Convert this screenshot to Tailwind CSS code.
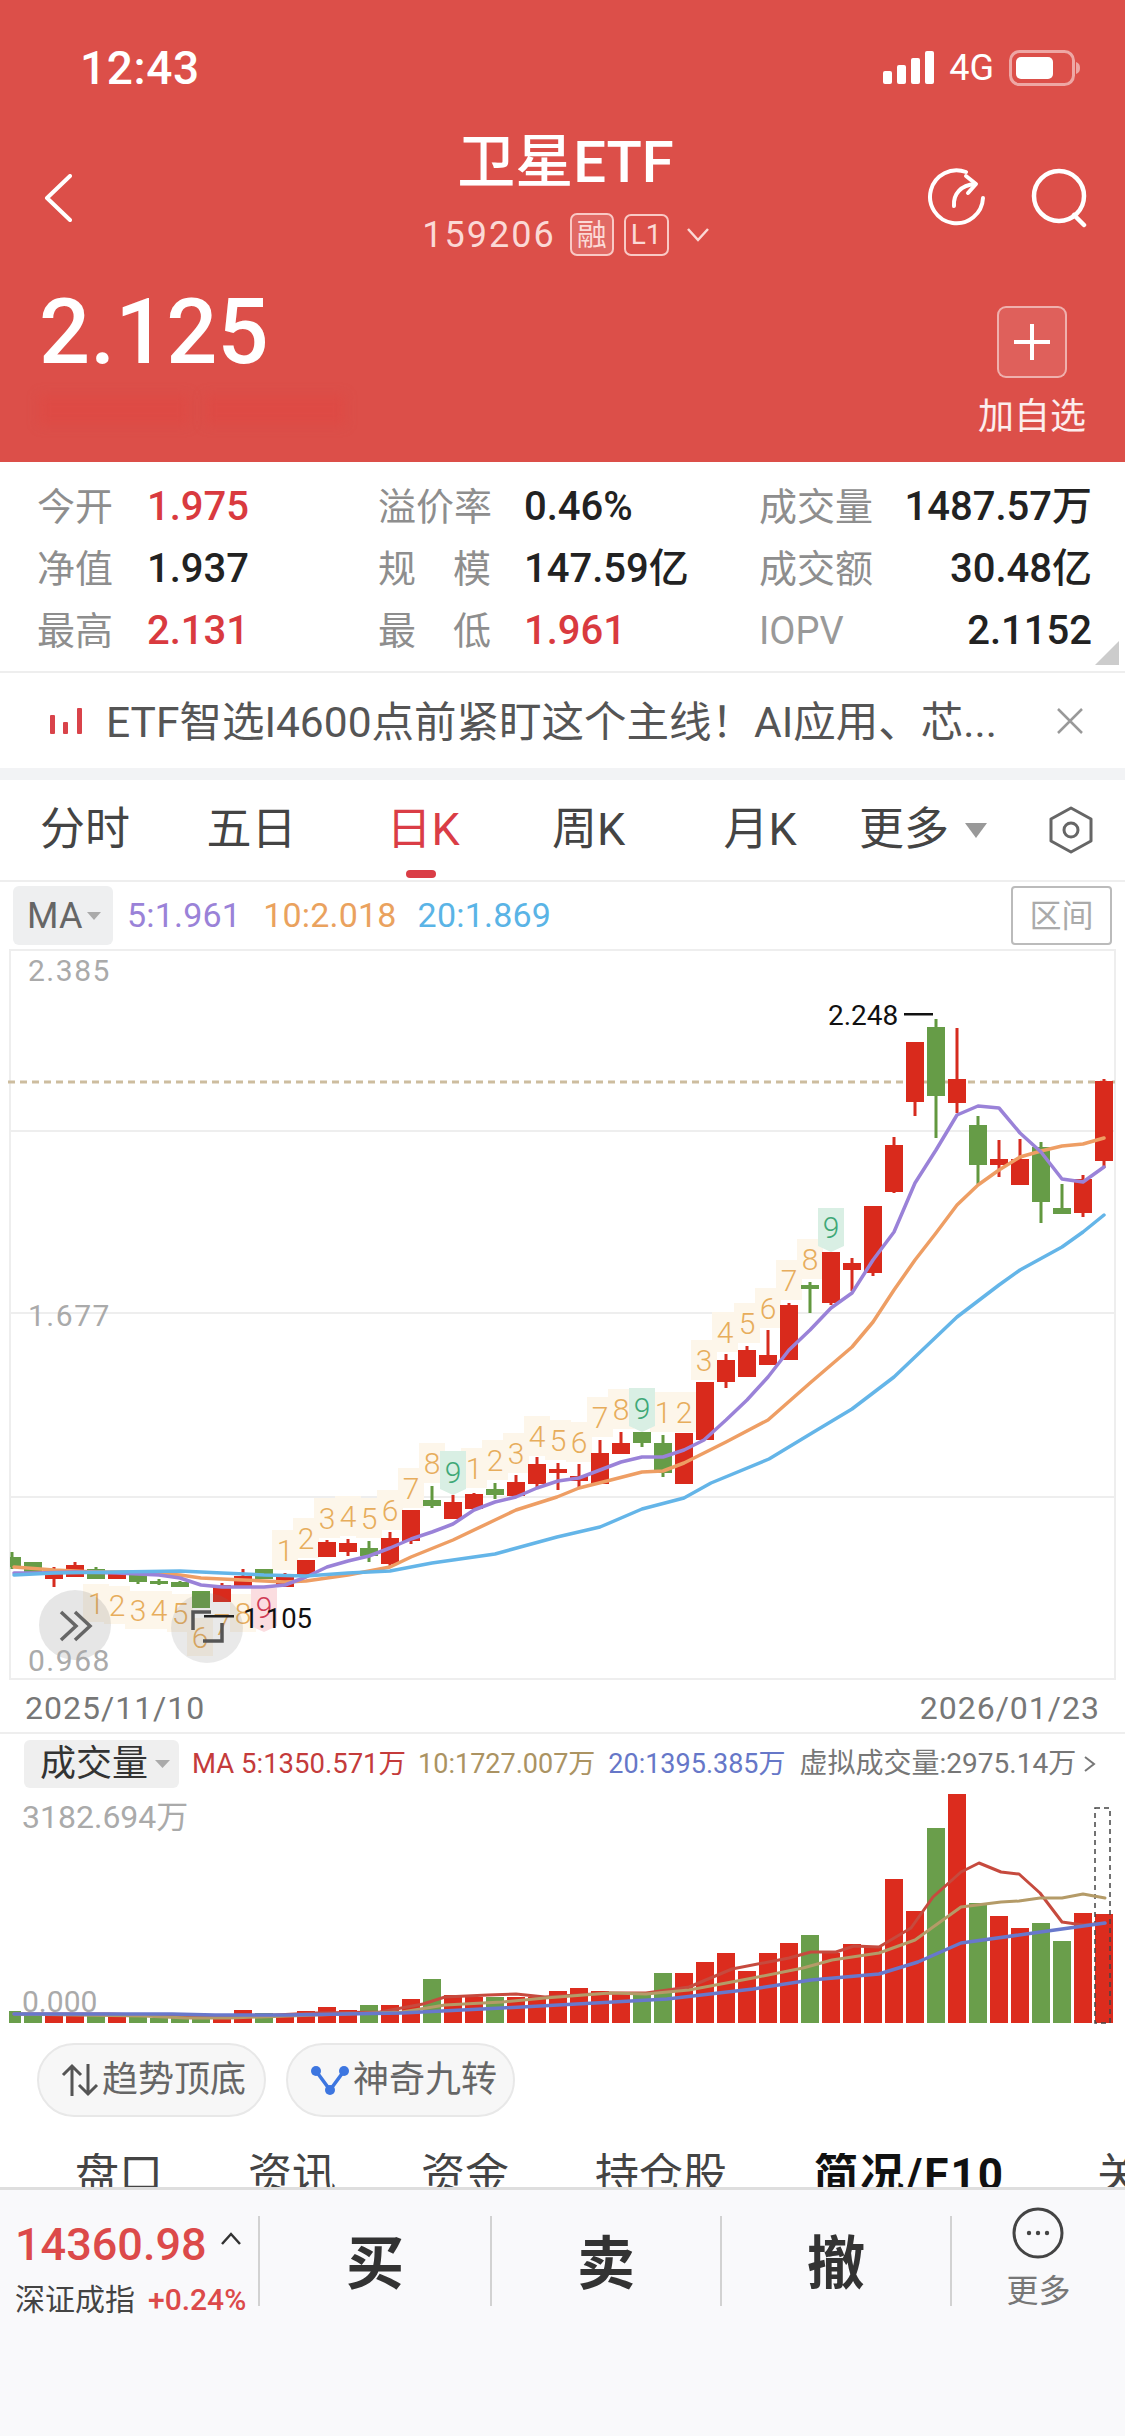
<!DOCTYPE html>
<html lang="zh">
<head>
<meta charset="utf-8">
<script src="https://cdn.jsdelivr.net/npm/@tailwindcss/browser@4"></script>
</head>
<body>
<div class="w-[1125px] h-[2436px] overflow-hidden flex flex-col bg-white font-['Roboto','Noto_Sans_CJK_SC',sans-serif]">

  <header class="h-[462px] shrink-0 bg-[#dc4f49] text-white flex flex-col">
    <div class="h-[136px] shrink-0 flex items-center justify-between pl-[80px] pr-[44px]">
      <span class="text-[46px] leading-none tracking-[.6px] font-medium">12:43</span>
      <div class="flex items-center">
        <svg width="52" height="34" viewBox="0 0 52 34" class="mr-[14px]"><g fill="#fff"><rect x="0" y="20" width="9" height="13" rx="2"/><rect x="14" y="14" width="9" height="19" rx="2"/><rect x="28" y="7" width="9" height="26" rx="2"/><rect x="42" y="0" width="9" height="33" rx="2"/></g></svg>
        <span class="text-[36px] leading-none mr-[15px]">4G</span>
        <svg width="72" height="36" viewBox="0 0 72 36"><rect x="1.5" y="1.5" width="63" height="33" rx="9" fill="none" stroke="#fff" stroke-opacity=".5" stroke-width="3"/><rect x="7" y="7" width="37" height="22" rx="5" fill="#fff"/><path d="M67 12c3 1 4 3 4 6s-1 5-4 6z" fill="#fff" fill-opacity=".5"/></svg>
      </div>
    </div>

    <div class="h-[124px] shrink-0 grid grid-cols-[1fr_auto_1fr] items-center pl-[44px] pr-[38px]">
      <svg width="28" height="48" viewBox="0 0 28 48" fill="none" stroke="#fff" stroke-width="4" stroke-linecap="round" stroke-linejoin="round"><path d="M26 2 3 24l23 22"/></svg>
      <div class="flex flex-col items-center -translate-y-[4px]">
        <div class="text-[58px] leading-[60px] font-medium">卫星ETF</div>
        <div class="flex items-center mt-[21px] text-[#fbd9d6]">
          <span class="text-[36px] leading-none tracking-[2px] mr-[14px]">159206</span>
          <span class="w-[44px] h-[43px] border-2 border-[#f9c9c5] rounded-[7px] bg-white/15 flex items-center justify-center text-[30px] leading-none mr-[10px]">融</span>
          <span class="w-[45px] h-[42px] border-2 border-[#f9c9c5] rounded-[7px] flex items-center justify-center text-[28px] leading-none mr-[18px]">L1</span>
          <svg width="22" height="14" viewBox="0 0 22 14" fill="none" stroke="#fbd9d6" stroke-width="2.5"><path d="M1 1l10 11L21 1"/></svg>
        </div>
      </div>
      <div class="flex justify-end items-center gap-[44px]">
        <svg width="60" height="60" viewBox="927 168 60 60" fill="none" stroke="#fff" stroke-width="4" stroke-linecap="round" stroke-linejoin="round"><path d="M966 172A26.500 26.500 0 1 0 983 198"/><path d="M954 206C953 194 961 185 975 184"/><path d="M966 176l10 8-8 9"/></svg>
        <svg width="56" height="60" viewBox="1032 170 56 60" fill="none" stroke="#fff" stroke-width="4.500" stroke-linecap="round"><circle cx="1060" cy="198" r="25"/><path d="M1075 217l10 10"/></svg>
      </div>
    </div>

    <div class="flex-1 flex justify-between pl-[39px] pr-[40px]">
      <div class="flex flex-col">
        <div class="text-[90px] leading-[92px] font-medium mt-[27px]">2.125</div>
        <div class="flex mt-[16px] gap-[16px]">
          <div class="w-[150px] h-[30px] bg-[#e2443e]/40 blur-[6px]"></div>
          <div class="w-[140px] h-[30px] bg-[#e2443e]/40 blur-[6px]"></div>
        </div>
      </div>
      <div class="flex flex-col items-center w-[106px]">
        <div class="w-[70px] h-[72px] mt-[46px] border-2 border-white/50 bg-white/10 rounded-[9px] flex items-center justify-center">
          <svg width="36" height="36" viewBox="0 0 36 36" stroke="#fff" stroke-width="4"><path d="M18 0v36M0 18h36"/></svg>
        </div>
        <div class="text-[36px] leading-[40px] mt-[19px] text-white/90 whitespace-nowrap">加自选</div>
      </div>
    </div>
  </header>

  <section class="relative h-[211px] shrink-0 border-b-2 border-[#eeeeee] pt-[14px] pl-[37px] grid grid-cols-[341px_381px_1fr] grid-rows-[62px_62px_62px] text-[40px] leading-none font-medium text-[#222] items-center">
    <div class="flex items-center"><span class="w-[110px] text-[38px] font-normal text-[#8e8e8e]">今开</span><span class="text-[#d93a3f]">1.975</span></div>
    <div class="flex items-center"><span class="w-[146px] text-[38px] font-normal text-[#8e8e8e]">溢价率</span><span>0.46%</span></div>
    <div class="flex items-center justify-between pr-[33px]"><span class="text-[38px] font-normal text-[#8e8e8e]">成交量</span><span>1487.57万</span></div>

    <div class="flex items-center"><span class="w-[110px] text-[38px] font-normal text-[#8e8e8e]">净值</span><span>1.937</span></div>
    <div class="flex items-center"><span class="w-[146px] pr-[33px] flex justify-between text-[38px] font-normal text-[#8e8e8e]"><span>规</span><span>模</span></span><span>147.59亿</span></div>
    <div class="flex items-center justify-between pr-[33px]"><span class="text-[38px] font-normal text-[#8e8e8e]">成交额</span><span>30.48亿</span></div>

    <div class="flex items-center"><span class="w-[110px] text-[38px] font-normal text-[#8e8e8e]">最高</span><span class="text-[#d93a3f]">2.131</span></div>
    <div class="flex items-center"><span class="w-[146px] pr-[33px] flex justify-between text-[38px] font-normal text-[#8e8e8e]"><span>最</span><span>低</span></span><span class="text-[#d93a3f]">1.961</span></div>
    <div class="flex items-center justify-between pr-[33px]"><span class="text-[38px] font-normal text-[#999]">IOPV</span><span>2.1152</span></div>

    <svg class="absolute right-[6px] bottom-[6px]" width="24" height="24" viewBox="0 0 24 24"><path d="M24 0v24H0z" fill="#cccccc"/></svg>
  </section>

  <section class="h-[95px] shrink-0 flex items-center pl-[50px] pr-[42px]">
    <svg width="32" height="26" viewBox="0 0 32 26" fill="#d9434a" class="mr-[24px]"><rect x="0" y="7" width="5" height="19" rx="1"/><rect x="13" y="14" width="5" height="12" rx="1"/><rect x="27" y="0" width="5" height="26" rx="1"/></svg>
    <span class="flex-1 mt-[6px] text-[42.500px] leading-none text-[#555] whitespace-nowrap">ETF智选I4600点前紧盯这个主线！AI应用、芯...</span>
    <svg width="26" height="26" viewBox="0 0 26 26" stroke="#999" stroke-width="2.500" fill="none"><path d="M1 1l24 24M25 1 1 25"/></svg>
  </section>
  <div class="h-[12px] shrink-0 bg-[#f2f3f5]"></div>

  <nav class="relative h-[102px] shrink-0 border-b-2 border-[#eeeeee] flex items-center text-[45px] text-[#444]">
    <span class="w-[170px] text-center">分时</span>
    <span class="w-[163px] text-center">五日</span>
    <span class="w-[180px] text-center text-[#da3d46]">日K</span>
    <span class="w-[151px] text-center">周K</span>
    <span class="w-[192px] text-center">月K</span>
    <span class="ml-[3px]">更多</span>
    <svg class="ml-[16px]" width="22" height="15" viewBox="0 0 22 15"><path d="M0 0h22L11 15z" fill="#999"/></svg>
    <svg class="ml-[62px]" width="44" height="48" viewBox="0 0 44 48" fill="none" stroke="#666" stroke-width="3" stroke-linejoin="round"><path d="M22 2l20 11v22L22 46 2 35V13z"/><circle cx="22" cy="24" r="7"/></svg>
    <div class="absolute left-[406px] bottom-[2px] w-[30px] h-[8px] rounded-full bg-[#da3d46]"></div>
  </nav>

  <section class="h-[67px] shrink-0 flex items-center pl-[13px] pr-[13px] text-[34px] tracking-[.2px]">
    <div class="w-[100px] h-[59px] rounded-[6px] bg-[#eeeff0] flex items-center pl-[14px] text-[36px] text-[#666]">MA<svg class="ml-[4px]" width="14" height="8" viewBox="0 0 14 8"><path d="M0 0h14L7 8z" fill="#aaa"/></svg></div>
    <span class="ml-[14px] text-[#9a82d8]">5:1.961</span>
    <span class="ml-[22px] text-[#eaa25e]">10:2.018</span>
    <span class="ml-[21px] text-[#5ab4e6]">20:1.869</span>
    <span class="ml-auto w-[101px] h-[59px] border-2 border-[#bbb] rounded-[4px] flex items-center justify-center text-[32px] tracking-normal text-[#aaa]">区间</span>
  </section>

  <svg class="shrink-0" width="1125" height="731" viewBox="0 949 1125 731">
    <g stroke="#eeeeee" stroke-width="2" fill="none"><path d="M10 950H1115M10 1131H1115M10 1313H1115M10 1497H1115M10 1679H1115M10 949V1680M1115 949V1680"/></g>
    <path d="M8 1082H1115" stroke="#cdbd9f" stroke-width="3" stroke-dasharray="7 5"/>

    <!-- TD sequence markers -->
    <g fill="#fdf6ea">
      <path d="M83 1584h26v38H83zM104 1586h26v38h-26zM125 1591h26v38h-26zM146 1591h26v38h-26zM167 1594h26v38h-26zM187 1618h26v38h-26zM230 1594h26v38h-26z"/>
      <path d="M272 1530h26v40h-26zM293 1518h26v40h-26zM314 1498h26v40h-26zM335 1496h26v40h-26zM356 1498h26v40h-26zM377 1490h26v40h-26zM398 1468h26v40h-26zM419 1443h26v40h-26zM461 1448h26v40h-26zM482 1440h26v40h-26zM503 1433h26v40h-26zM524 1416h26v40h-26zM545 1420h26v40h-26zM566 1422h26v40h-26zM587 1397h26v40h-26zM608 1389h26v40h-26zM650 1392h26v40h-26zM671 1392h26v40h-26z"/>
      <path d="M691 1340h26v40h-26zM712 1312h26v40h-26zM734 1303h26v40h-26zM755 1288h26v40h-26zM776 1260h26v40h-26zM797 1239h26v40h-26z"/>
    </g>
    <g fill="#d9efe4"><path d="M440 1451h26v38l-13 6-13-6zM629 1388h26v38l-13 6-13-6zM818 1208h26v38l-13 6-13-6z"/></g>
    <path d="M251 1588h26v38l-13 6-13-6z" fill="#fbdde0"/>
    <g fill="#e7ad5c" font-size="30" font-weight="300" text-anchor="middle">
      <text x="96" y="1614">1</text><text x="117" y="1616">2</text><text x="138" y="1621">3</text><text x="159" y="1621">4</text><text x="180" y="1624">5</text><text x="200" y="1648">6</text><text x="222" y="1635">7</text><text x="243" y="1624">8</text>
      <text x="285" y="1561">1</text><text x="306" y="1549">2</text><text x="327" y="1529">3</text><text x="348" y="1527">4</text><text x="369" y="1529">5</text><text x="390" y="1521">6</text><text x="411" y="1499">7</text><text x="432" y="1474">8</text><text x="474" y="1479">1</text><text x="495" y="1471">2</text><text x="516" y="1464">3</text><text x="537" y="1447">4</text><text x="558" y="1451">5</text><text x="579" y="1453">6</text><text x="600" y="1428">7</text><text x="621" y="1420">8</text><text x="663" y="1423">1</text><text x="684" y="1423">2</text>
      <text x="704" y="1371">3</text><text x="725" y="1343">4</text><text x="747" y="1334">5</text><text x="768" y="1319">6</text><text x="789" y="1291">7</text><text x="810" y="1270">8</text>
    </g>
    <g fill="#3fa877" font-size="30" font-weight="300" text-anchor="middle"><text x="453" y="1483">9</text><text x="642" y="1419">9</text><text x="831" y="1238">9</text></g>
    <text x="264" y="1618" fill="#d03a55" font-size="30" font-weight="300" text-anchor="middle">9</text>

    <!-- candles -->
    <path fill="none" stroke="#d62b1f" stroke-width="3" d="M54 1567V1587M75 1562V1577M222 1583V1602M243 1569V1587M285 1573V1587M327 1540V1557M348 1539V1556M390 1532V1567M411 1510V1544M453 1495V1519M474 1493V1509M516 1475V1496M537 1457V1487M558 1463V1490M579 1464V1489M600 1440V1484M621 1432V1454M726 1354V1388M747 1346V1377M768 1330V1365M789 1303V1360M831 1252V1305M852 1258V1291M873 1206V1276M894 1137V1193M915 1042V1116M957 1028V1113M999 1140V1177M1020 1139V1185M1083 1175V1217M1104 1079V1168"/>
    <path fill="#d92a1c" d="M45 1573h18V1579h-18zM66 1565h18V1577h-18zM108 1571h18V1579h-18zM213 1585h18V1602h-18zM234 1576h18V1587h-18zM276 1577h18V1587h-18zM297 1560h18V1577h-18zM318 1542h18V1557h-18zM339 1543h18V1552h-18zM381 1538h18V1564h-18zM402 1510h18V1541h-18zM444 1502h18V1519h-18zM465 1494h18V1509h-18zM507 1482h18V1496h-18zM528 1464h18V1484h-18zM549 1469h18V1473h-18zM570 1476h18V1481h-18zM591 1453h18V1484h-18zM612 1443h18V1454h-18zM675 1433h18V1484h-18zM696 1382h18V1440h-18zM717 1360h18V1382h-18zM738 1350h18V1377h-18zM759 1355h18V1365h-18zM780 1305h18V1360h-18zM822 1252h18V1303h-18zM843 1263h18V1270h-18zM864 1206h18V1273h-18zM885 1145h18V1192h-18zM906 1042h18V1102h-18zM948 1079h18V1103h-18zM990 1159h18V1165h-18zM1011 1159h18V1185h-18zM1074 1179h18V1213h-18zM1095 1081h18V1161h-18z"/>
    <path fill="none" stroke="#62983f" stroke-width="3" d="M12 1552V1569M96 1567V1579M138 1575V1584M159 1579V1585M180 1581V1587M369 1541V1562M432 1486V1508M495 1483V1499M642 1432V1447M663 1435V1477M810 1282V1313M936 1019V1138M978 1116V1184M1041 1142V1223M1062 1184V1214"/>
    <path fill="#669c47" d="M10 1557h11V1567h-11zM24 1562h18V1575h-18zM87 1569h18V1579h-18zM129 1575h18V1582h-18zM150 1581h18V1584h-18zM171 1582h18V1587h-18zM192 1591h18V1608h-18zM255 1569h18V1579h-18zM360 1548h18V1556h-18zM423 1500h18V1506h-18zM486 1489h18V1495h-18zM633 1432h18V1443h-18zM654 1443h18V1473h-18zM801 1285h18V1289h-18zM927 1027h18V1096h-18zM969 1125h18V1165h-18zM1032 1147h18V1202h-18zM1053 1208h18V1214h-18z"/>

    <!-- moving averages -->
    <g fill="none" stroke-width="3.500" stroke-linejoin="round" stroke-linecap="round">
      <polyline stroke="#ee9e64" points="14,1567 54,1570 96,1572 138,1572 180,1575 201,1578 243,1580 285,1582 306,1581 348,1575 390,1567 411,1557 453,1540 495,1520 516,1510 557,1497 579,1488 607,1481 642,1472 663,1471 684,1463 704,1453 726,1442 768,1420 810,1383 852,1347 873,1322 894,1290 915,1260 936,1233 957,1205 978,1185 999,1170 1020,1157 1041,1151 1062,1146 1083,1144 1104,1138"/>
      <polyline stroke="#9a82d8" points="14,1573 36,1573 75,1572 117,1573 159,1575 180,1578 201,1585 222,1587 243,1587 264,1587 285,1585 306,1577 327,1567 348,1561 369,1556 390,1548 411,1539 432,1532 453,1524 474,1510 495,1502 516,1497 537,1488 558,1481 579,1478 600,1470 621,1462 642,1457 663,1457 684,1450 704,1440 726,1420 747,1400 768,1377 789,1350 810,1330 831,1308 852,1293 873,1260 894,1232 915,1183 936,1150 957,1115 978,1106 999,1108 1020,1133 1041,1152 1062,1179 1083,1182 1104,1167"/>
      <polyline stroke="#64b5e8" points="14,1575 54,1573 117,1572 180,1571 222,1573 264,1575 306,1576 348,1573 390,1571 432,1563 495,1554 557,1537 600,1527 642,1509 684,1498 711,1483 769,1459 812,1433 852,1409 894,1377 915,1357 957,1317 999,1285 1020,1270 1062,1247 1083,1232 1104,1215"/>
    </g>

    <!-- high / low marks -->
    <text x="828" y="1025" font-size="28" fill="#111">2.248</text>
    <rect x="904" y="1013" width="29" height="2.500" fill="#111"/>
    <text x="243" y="1628" font-size="27.500" fill="#111">1.105</text>
    <rect x="204" y="1615" width="30" height="2.500" fill="#111"/>

    <!-- floating buttons -->
    <ellipse cx="75" cy="1625" rx="36" ry="35" fill="#777" fill-opacity=".18"/>
    <path d="M61 1612l15 14-15 14M75 1612l15 14-15 14" fill="none" stroke="#666" stroke-width="3.500"/>
    <ellipse cx="207" cy="1628" rx="36" ry="35" fill="#777" fill-opacity=".16"/>
    <path d="M193 1630v-18h18M222 1623v18h-19" fill="none" stroke="#555" stroke-width="3.500"/>

    <g font-size="30" fill="#aaaaaa" letter-spacing="1.500">
      <text x="28" y="981">2.385</text>
      <text x="28" y="1326">1.677</text>
      <text x="28" y="1671">0.968</text>
    </g>
  </svg>

  <div class="h-[54px] shrink-0 border-b-2 border-[#eeeeee] flex items-center justify-between pt-[4px] pl-[25px] pr-[25px] text-[32px] leading-none text-[#777] tracking-[1px]">
    <span>2025/11/10</span><span>2026/01/23</span>
  </div>

  <div class="h-[60px] shrink-0 flex items-center pl-[24px] text-[27px] leading-none whitespace-nowrap">
    <div class="w-[155px] h-[48px] bg-[#efefef] rounded-[6px] flex items-center pl-[16px] text-[36px] text-[#333]">成交量<svg class="ml-[7px]" width="15" height="8" viewBox="0 0 15 8"><path d="M0 0h15L7.500 8z" fill="#aaa"/></svg></div>
    <span class="ml-[13px] text-[27.500px] text-[#c43b3b]">MA 5:1350.571万</span>
    <span class="ml-[12px] text-[#ab9362]">10:1727.007万</span>
    <span class="ml-[13px] text-[#6677c8]">20:1395.385万</span>
    <span class="ml-[14px] text-[28px] text-[#777]">虚拟成交量:2975.14万</span>
    <svg class="ml-[8px]" width="12" height="16" viewBox="0 0 12 16" fill="none" stroke="#777" stroke-width="2"><path d="M1 1l9 7-9 7"/></svg>
  </div>

  <svg class="shrink-0" width="1125" height="234" viewBox="0 1794 1125 234">
    <path fill="#dc2c1e" d="M45 2016h18V2023h-18zM66 2016h18V2023h-18zM108 2015h18V2023h-18zM213 2015h18V2023h-18zM234 2010h18V2023h-18zM276 2015h18V2023h-18zM297 2011h18V2023h-18zM318 2007h18V2023h-18zM339 2010h18V2023h-18zM381 2005h18V2023h-18zM402 1999h18V2023h-18zM444 1995h18V2023h-18zM465 1997h18V2023h-18zM507 1997h18V2023h-18zM528 1997h18V2023h-18zM549 1991h18V2023h-18zM570 1988h18V2023h-18zM591 1991h18V2023h-18zM612 1993h18V2023h-18zM675 1973h18V2023h-18zM696 1962h18V2023h-18zM717 1953h18V2023h-18zM738 1971h18V2023h-18zM759 1953h18V2023h-18zM780 1943h18V2023h-18zM822 1953h18V2023h-18zM843 1944h18V2023h-18zM864 1946h18V2023h-18zM885 1879h18V2023h-18zM906 1911h18V2023h-18zM948 1792h18V2023h-18zM990 1916h18V2023h-18zM1011 1928h18V2023h-18zM1074 1913h18V2023h-18zM1095 1914h18V2023h-18z"/>
    <path fill="#6a9e4b" d="M9 2011h12V2023H9zM24 2015h18V2023h-18zM87 2015h18V2023h-18zM129 2017h18V2023h-18zM150 2018h18V2023h-18zM171 2018h18V2023h-18zM192 2017h18V2023h-18zM255 2013h18V2023h-18zM360 2005h18V2023h-18zM423 1979h18V2023h-18zM486 1997h18V2023h-18zM633 1993h18V2023h-18zM654 1973h18V2023h-18zM801 1935h18V2023h-18zM927 1828h18V2023h-18zM969 1903h18V2023h-18zM1032 1923h18V2023h-18zM1053 1941h18V2023h-18z"/>
    <rect x="1095" y="1808" width="15" height="215" fill="none" stroke="#444" stroke-width="1.500" stroke-dasharray="5 4"/>
    <g fill="none" stroke-width="3" stroke-linejoin="round" stroke-linecap="round">
      <polyline stroke="#c64a3e" points="14,2014 108,2014 179,2016 230,2017 316,2013 380,2012 423,2004 445,1997 488,1995 516,1994 545,1997 610,1993 646,1993 689,1987 732,1969 789,1958 811,1952 836,1952 854,1946 879,1947 911,1928 933,1897 961,1872 979,1863 1001,1872 1019,1874 1040,1893 1062,1922 1083,1925 1105,1923"/>
      <polyline stroke="#b49b68" points="14,2014 143,2016 187,2018 230,2018 316,2015 402,2012 445,2005 502,2002 545,1998 610,1993 646,1994 689,1990 753,1978 803,1968 832,1960 879,1953 915,1940 961,1907 1001,1902 1019,1901 1040,1898 1062,1898 1083,1894 1105,1898"/>
      <polyline stroke="#6878cc" stroke-width="3.500" points="14,2014 172,2014 215,2015 287,2015 402,2013 502,2008 595,2003 667,1999 753,1989 811,1980 879,1974 918,1962 961,1943 1019,1935 1105,1923"/>
    </g>
    <text x="22" y="1828" font-size="32" fill="#aaaaaa">3182.694万</text>
    <text x="22" y="2012" font-size="30" fill="#aaaaaa">0.000</text>
  </svg>

  <div class="h-[125px] shrink-0 flex items-start pt-[15px] pl-[37px] gap-[20px] text-[36px] leading-none text-[#666]">
    <div class="w-[229px] h-[74px] rounded-full border-2 border-[#e8e8e8] bg-[#f7f7f7] flex items-center pl-[22px]">
      <svg width="38" height="34" viewBox="0 0 38 34" fill="none" stroke="#555" stroke-width="3" class="mr-[3px]"><path d="M11 33V3M2 12l9-9 9 9M27 1v30M18 22l9 9 9-9"/></svg>
      <span>趋势顶底</span>
    </div>
    <div class="w-[229px] h-[74px] rounded-full border-2 border-[#e8e8e8] bg-[#f7f7f7] flex items-center pl-[23px]">
      <svg width="38" height="30" viewBox="0 0 38 30" class="mr-[4px]"><path d="M5 6 19 25 33 6" fill="none" stroke="#3d76e0" stroke-width="3.500"/><circle cx="5" cy="6" r="5" fill="#3d76e0"/><circle cx="33" cy="6" r="5" fill="#3d76e0"/><circle cx="19" cy="25" r="5" fill="#3d76e0"/></svg>
      <span>神奇九转</span>
    </div>
  </div>

  <div class="h-[34px] shrink-0 overflow-hidden flex items-start pl-[75px] text-[44px] leading-[44px] text-[#444] whitespace-nowrap">
    <span class="w-[173px] shrink-0">盘口</span>
    <span class="w-[173px] shrink-0">资讯</span>
    <span class="w-[174px] shrink-0">资金</span>
    <span class="w-[219px] shrink-0">持仓股</span>
    <span class="w-[283px] shrink-0 font-bold tracking-[2px] text-[#111]">简况/F10</span>
    <span class="shrink-0">关</span>
  </div>

  <footer class="flex-1 border-t-[3px] border-[#dedede] bg-[#f9f9fb] flex items-start pt-[26px]">
    <div class="w-[258px] flex flex-col pl-[15px]">
      <div class="flex items-center h-[56px] shrink-0">
        <span class="text-[45px] leading-none font-medium text-[#dc4a4a]">14360.98</span>
        <svg class="ml-[14px] -mt-[12px]" width="20" height="13" viewBox="0 0 20 13" fill="none" stroke="#333" stroke-width="2.500"><path d="M1 12 10 2l9 10"/></svg>
      </div>
      <div class="flex items-center h-[40px] shrink-0 mt-[8px] text-[30px] leading-none whitespace-nowrap">
        <span class="text-[#444]">深证成指</span>
        <span class="ml-[13px] font-medium text-[#dc4a4a]">+0.24%</span>
      </div>
    </div>
    <div class="w-[232px] h-[90px] border-l-2 border-[#d2d2d2] flex items-center justify-center pt-[5px] text-[58px] leading-none font-bold text-[#333]">买</div>
    <div class="w-[230px] h-[90px] border-l-2 border-[#d2d2d2] flex items-center justify-center pt-[5px] text-[58px] leading-none font-bold text-[#333]">卖</div>
    <div class="w-[230px] h-[90px] border-l-2 border-[#d2d2d2] flex items-center justify-center pt-[5px] text-[58px] leading-none font-bold text-[#333]">撤</div>
    <div class="w-[175px] h-[90px] border-l-2 border-[#d2d2d2] flex flex-col items-center">
      <svg width="52" height="52" viewBox="0 0 52 52" class="shrink-0 -mt-[9px] -translate-x-[1px]"><circle cx="26" cy="26" r="24" fill="none" stroke="#444" stroke-width="3"/><circle cx="17" cy="26" r="2.200" fill="#444"/><circle cx="26" cy="26" r="2.200" fill="#444"/><circle cx="35" cy="26" r="2.200" fill="#444"/></svg>
      <span class="text-[32px] leading-none mt-[16px] text-[#777]">更多</span>
    </div>
  </footer>
</div>
</body>
</html>
